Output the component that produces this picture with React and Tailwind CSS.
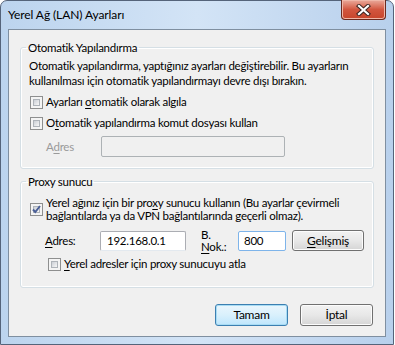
import React from "react";

const font = { fontFamily: 'Lato, "Noto Sans", sans-serif' };

function CheckBox({ checked }) {
  return (
    <span className="relative w-[13px] h-[13px] flex-shrink-0 border border-[#8e8f8f] bg-[#f4f4f4] p-[2px]">
      <span className="block w-full h-full border border-[#aeb3b9] bg-gradient-to-br from-[#cbcfd5] to-[#f7f7f7]" />
      {checked && (
        <svg className="absolute left-0 top-0" width="11" height="11" viewBox="0 0 11 11">
          <path d="M2 5.5 L4.3 8 L9 2" fill="none" stroke="#4a5f97" strokeWidth="1.9" />
        </svg>
      )}
    </span>
  );
}

function Key({ children }) {
  return <span className="underline underline-offset-2 decoration-1">{children}</span>;
}

function Button({ children, primary, className = "" }) {
  return (
    <button
      className={`h-[21px] rounded-[3px] border text-[12px] text-black leading-none flex items-center justify-center ${
        primary
          ? "border-[#3c7fb1] shadow-[inset_0_0_0_1px_#a8dcf4] bg-gradient-to-b from-[#eaf6fd] via-[#d9f0fc] to-[#bee6fd]"
          : "border-[#707070] shadow-[inset_0_0_0_1px_#fcfcfc] bg-gradient-to-b from-[#f2f2f2] via-[#e8e8e8] to-[#d5d5d5]"
      } ${className}`}
    >
      {children}
    </button>
  );
}

export default function App() {
  return (
    <div className="w-[395px] h-[345px] bg-white" style={font}>
      {/* ─── Window frame ─────────────────────────── */}
      <div className="relative w-[394px] h-[345px] rounded-t-[7px] border border-[#55647a] bg-gradient-to-r from-[#bcd4ee] via-[#d3e4f6] to-[#b8d0ec] flex flex-col">
        {/* Title bar */}
        <div className="h-[28px] flex items-center pl-[7px] text-[12px] tracking-[-0.1px] text-black">
          Yerel Ağ (LAN) Ayarları
        </div>

        {/* Close button */}
        <div className="absolute top-[-1px] right-[7px] w-[45px] h-[20px] rounded-b-[4px] border border-[#6b2a1f] border-t-0 bg-gradient-to-b from-[#e9a99b] via-[#d2563f] to-[#c7452b] shadow-[inset_0_0_0_1px_#f0b7a8] flex items-center justify-center">
          <svg width="15" height="12" viewBox="0 0 15 12">
            <path d="M3 2 L12 10 M12 2 L3 10" stroke="#3d2622" strokeWidth="4.2" strokeLinecap="square" />
            <path d="M3 2 L12 10 M12 2 L3 10" stroke="#ffffff" strokeWidth="2.2" strokeLinecap="square" />
          </svg>
        </div>

        {/* Client area */}
        <div className="mx-[7px] h-[308px] border border-[#7f8fa0] bg-[#f0f0f0] px-[11px] pt-[10px] text-[11.5px] tracking-[-0.25px] text-black">
          {/* ─── Otomatik Yapılandırma ─── */}
          <fieldset className="min-w-0 h-[129px] border border-[#d5dfe5] rounded-[3px] shadow-[inset_0_0_0_1px_#fff] pl-[8px]">
            <legend className="ml-[-3px] px-[2px] leading-[15px]">Otomatik Yapılandırma</legend>
            <p className="mt-[3px] leading-[15px] whitespace-nowrap">
              Otomatik yapılandırma, yaptığınız ayarları değiştirebilir. Bu ayarların
              <br />
              kullanılması için otomatik yapılandırmayı devre dışı bırakın.
            </p>
            <label className="mt-[6px] ml-[1px] flex items-center gap-[3px] h-[16px]">
              <CheckBox />
              <span>
                Ayarları <Key>o</Key>tomatik olarak algıla
              </span>
            </label>
            <label className="mt-[5px] ml-[1px] flex items-center gap-[3px] h-[16px]">
              <CheckBox />
              <span>
                O<Key>t</Key>omatik yapılandırma komut dosyası kullan
              </span>
            </label>
            <div className="mt-[5px] flex items-center h-[21px]">
              <span className="ml-[17px] w-[55px] text-[#9a9a9a]">
                A<Key>d</Key>res
              </span>
              <div className="w-[184px] h-[21px] border border-[#adb2b5] rounded-[2px] bg-[#f0f0f0]" />
            </div>
          </fieldset>

          {/* ─── Proxy sunucu ─── */}
          <fieldset className="min-w-0 mt-[5px] h-[114px] border border-[#d5dfe5] rounded-[3px] shadow-[inset_0_0_0_1px_#fff] pl-[8px]">
            <legend className="ml-[-3px] px-[2px] leading-[15px]">Proxy sunucu</legend>
            <label className="mt-[7px] ml-[1px] flex items-center gap-[3px]">
              <CheckBox checked />
              <span className="leading-[13px] whitespace-nowrap">
                Yerel ağınız için bir pro<Key>x</Key>y sunucu kullanın (Bu ayarlar çevirmeli
                <br />
                bağlantılarda ya da VPN bağlantılarında geçerli olmaz).
              </span>
            </label>
            <div className="mt-[8px] flex items-center h-[21px]">
              <span className="ml-[16px] w-[55px]">
                <Key>A</Key>dres:
              </span>
              <div className="w-[86px] h-[20px] border border-[#abadb3] border-b-[#e3e9ef] rounded-[2px] bg-white pl-[6px] leading-[18px]">
                192.168.0.1
              </div>
              <span className="ml-[15px] w-[37px] leading-[12px] pt-[1px]">
                B.
                <br />
                <Key>N</Key>ok.:
              </span>
              <div className="w-[48px] h-[20px] border border-[#7eb4ea] rounded-[2px] bg-white pl-[5px] leading-[18px]">
                800
              </div>
              <Button className="ml-[6px] w-[72px] text-[11.5px]">
                <Key>G</Key>elişmiş
              </Button>
            </div>
            <label className="mt-[5px] ml-[19px] flex items-center gap-[3px] h-[16px]">
              <CheckBox />
              <span>
                <Key>Y</Key>erel adresler için proxy sunucuyu atla
              </span>
            </label>
          </fieldset>

          {/* ─── Buttons ─── */}
          <div className="mt-[16px] flex justify-end gap-[12px] pr-[1px]">
            <Button primary className="w-[73px] h-[22px] text-[11.5px]">
              Tamam
            </Button>
            <Button className="w-[73px] h-[22px] text-[11.5px]">İptal</Button>
          </div>
        </div>
      </div>
    </div>
  );
}
